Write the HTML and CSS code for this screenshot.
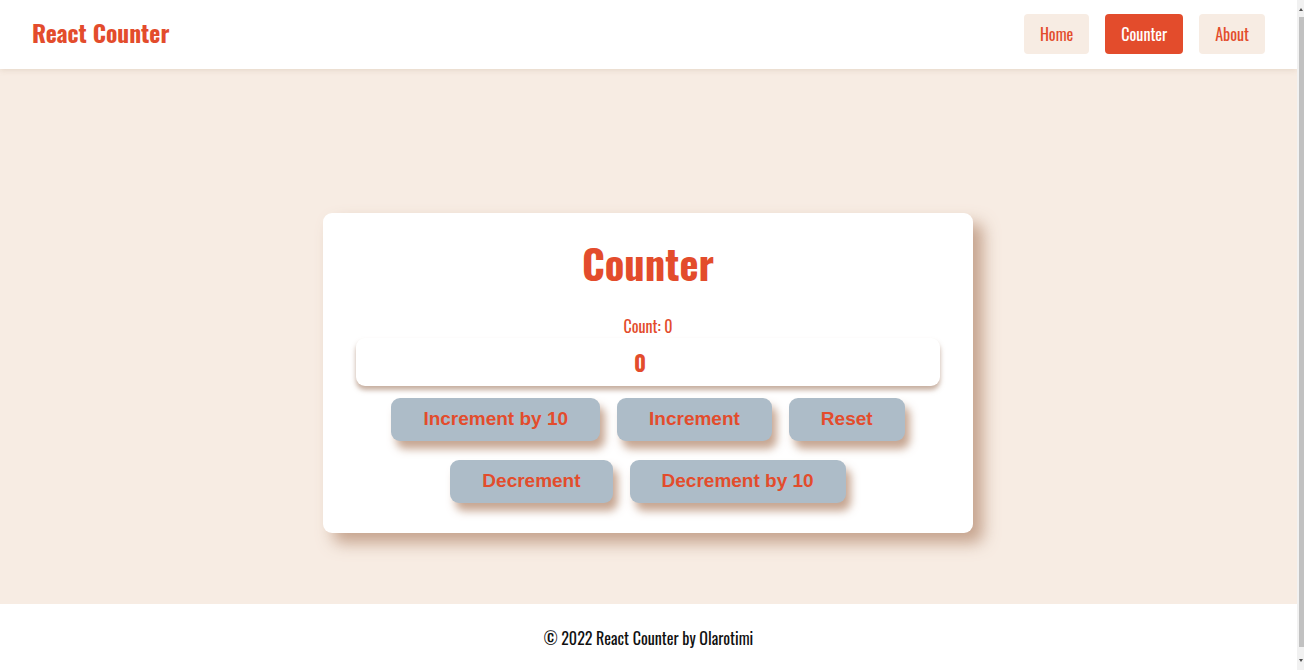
FILE: index.html
```html
<!DOCTYPE html>
<html lang="en">
<head>
<meta charset="utf-8">
<title>React Counter</title>
<link rel="stylesheet" href="styles.css">
</head>
<body>
<div class="page">
<header class="header">
  <div class="logo">React Counter</div>
  <nav class="nav">
    <a class="nav-link" href="#">Home</a>
    <a class="nav-link active" href="#">Counter</a>
    <a class="nav-link" href="#">About</a>
  </nav>
</header>
<main class="main">
  <section class="card">
    <h1 class="title">Counter</h1>
    <p class="count-label">Count: 0</p>
    <div class="display">0</div>
    <div class="buttons">
      <button class="btn">Increment by 10</button>
      <button class="btn">Increment</button>
      <button class="btn">Reset</button>
    </div>
    <div class="buttons">
      <button class="btn">Decrement</button>
      <button class="btn">Decrement by 10</button>
    </div>
  </section>
</main>
<footer class="footer">© 2022 React Counter by Olarotimi</footer>
</div>
<div class="scrollbar" aria-hidden="true">
  <span class="arrow up"></span>
  <span class="thumb"></span>
  <span class="arrow down"></span>
</div>
</body>
</html>
```
FILE: styles.css
```css
* { box-sizing: border-box; }
html, body { margin: 0; padding: 0; height: 100%; overflow: hidden; }
body {
  display: flex;
  font-family: "Oswald", "DejaVu Sans Condensed", sans-serif;
  background: #f7ece3;
  color: #e34c2c;
}
.page { flex: 1; min-width: 0; height: 100vh; overflow: hidden; }
.scrollbar {
  width: 7px; height: 100vh; background: #f1f1f1;
  display: flex; flex-direction: column; align-items: center;
  padding: 8px 0 8px 1px;
}
.arrow { width: 0; height: 0; border-left: 2px solid transparent; border-right: 2px solid transparent; }
.arrow.up { border-bottom: 3px solid #505050; }
.arrow.down { border-top: 3px solid #505050; }
.thumb { flex: 1; width: 5px; background: #c1c1c1; margin: 6px 0 12px; }
.header {
  height: 69px;
  background: #fff;
  display: flex;
  align-items: center;
  justify-content: space-between;
  padding: 0 32px;
  box-shadow: 0 1px 6px rgba(150, 110, 80, 0.18);
  position: relative;
  z-index: 1;
}
.logo { font-size: 23.5px; font-weight: 700; color: #e34c2c; line-height: 1; margin-top: -3px; }
.nav { display: flex; gap: 16px; margin-top: -1px; }
.nav-link {
  display: flex; align-items: center; justify-content: center;
  height: 40px; padding: 0 16px;
  background: #f7ece3; color: #e34c2c; border-radius: 4px;
  text-decoration: none; font-size: 16px;
}
.nav-link.active { background: #e34c2c; color: #fff; }
.main {
  padding: 144px 0 71px 0;
  display: flex; justify-content: center;
  background: #f7ece3;
}
.card {
  width: 650px; height: 320px;
  margin-right: 1px;
  background: #fff; border-radius: 9px;
  box-shadow: 10px 10px 16px rgba(185, 145, 120, 0.8);
  padding: 22px 33px 0;
  display: flex; flex-direction: column; align-items: center;
}
.title { margin: 0; font-size: 40.5px; font-weight: 700; line-height: 1.4; }
.count-label { margin: 25px 0 2px; font-size: 16px; line-height: 1.2; }
.display {
  width: 100%; height: 48px; background: #fff; border-radius: 9px;
  box-shadow: 0 4px 5px rgba(160, 120, 95, 0.6);
  display: flex; align-items: center; justify-content: center;
  padding-right: 16px;
  font-size: 22px; font-weight: 700;
}
.buttons { display: flex; justify-content: center; gap: 17px; margin-top: 12px; }
.buttons + .buttons { margin-top: 19px; }
.btn {
  font-family: "Liberation Sans", Arial, sans-serif;
  font-size: 19px; font-weight: 700; color: #e34c2c;
  background: #adbcc8; border: none; border-radius: 9px;
  height: 43px; padding: 0 32px;
  box-shadow: 5px 8px 8px rgba(185, 145, 120, 0.8);
}
.footer {
  background: #fff; height: 86px;
  padding-top: 22px;
  text-align: center; color: #111;
  font-size: 16px;
}
```
